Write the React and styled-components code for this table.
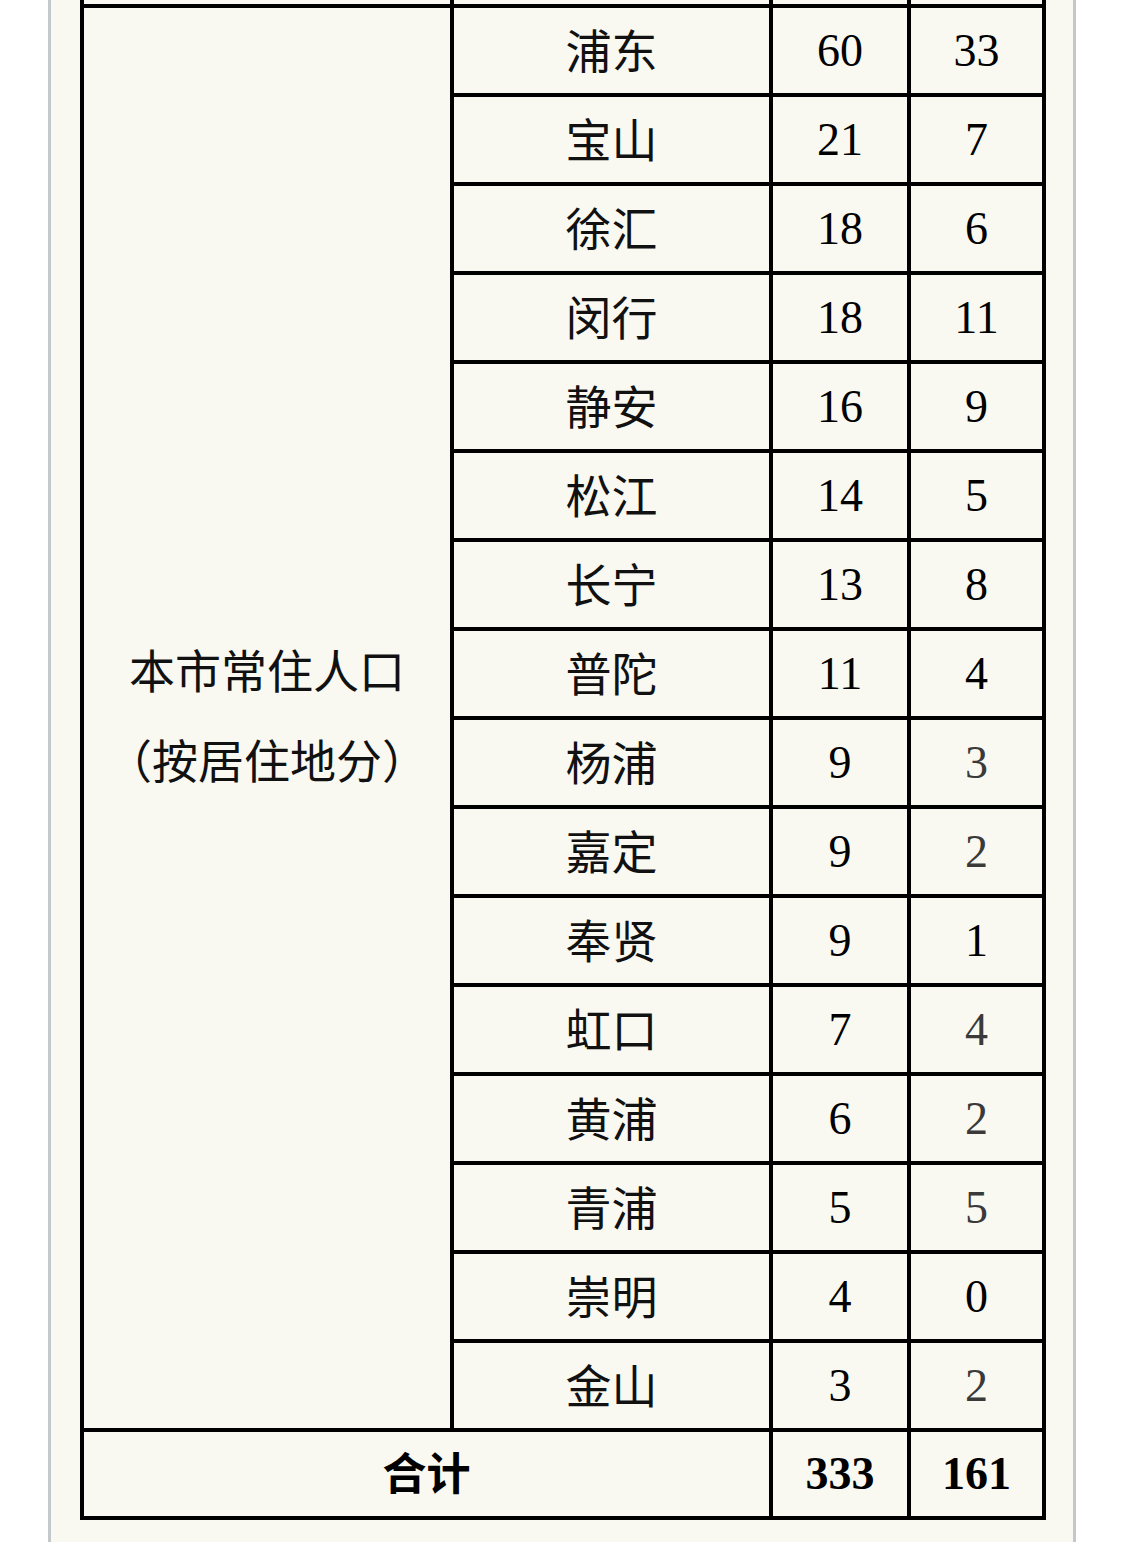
import React from 'react';
import styled, { createGlobalStyle } from 'styled-components';

const GlobalStyle = createGlobalStyle`
    html, body {
        margin: 0;
        padding: 0;
        background: #ffffff;
    }
`;

const districts = [
    { name: '浦东', total: 60, local: 33 },
    { name: '宝山', total: 21, local: 7 },
    { name: '徐汇', total: 18, local: 6 },
    { name: '闵行', total: 18, local: 11 },
    { name: '静安', total: 16, local: 9 },
    { name: '松江', total: 14, local: 5 },
    { name: '长宁', total: 13, local: 8 },
    { name: '普陀', total: 11, local: 4 },
    { name: '杨浦', total: 9, local: 3, muted: true },
    { name: '嘉定', total: 9, local: 2, muted: true },
    { name: '奉贤', total: 9, local: 1 },
    { name: '虹口', total: 7, local: 4, muted: true },
    { name: '黄浦', total: 6, local: 2, muted: true },
    { name: '青浦', total: 5, local: 5, muted: true },
    { name: '崇明', total: 4, local: 0 },
    { name: '金山', total: 3, local: 2, muted: true }
];

export default function App() {
    return (
        <>
            <GlobalStyle />
            <Panel>
                <Table>
                    <colgroup>
                        <col style={{ width: 370 }} />
                        <col style={{ width: 319 }} />
                        <col style={{ width: 138 }} />
                        <col style={{ width: 135 }} />
                    </colgroup>
                    <tbody>
                        <CutRow>
                            <CutCell />
                            <CutCell />
                            <CutCell />
                            <CutCell />
                        </CutRow>

                        {districts.map((d, i) => (
                            <Row key={d.name}>
                                {i === 0 && (
                                    <GroupCell rowSpan={districts.length}>
                                        本市常住人口<br />（按居住地分）
                                    </GroupCell>
                                )}
                                <NameCell>{d.name}</NameCell>
                                <NumCell>{d.total}</NumCell>
                                <NumCell $muted={d.muted}>{d.local}</NumCell>
                            </Row>
                        ))}

                        <TotalRow>
                            <TotalLabel colSpan={2}>合计</TotalLabel>
                            <TotalNum>333</TotalNum>
                            <TotalNum>161</TotalNum>
                        </TotalRow>
                    </tbody>
                </Table>
            </Panel>
        </>
    );
}

const Panel = styled.div`
    background-color: #f9f9f1;

    border-left: 3px solid #c3c8ca;

    border-right: 3px solid #c3c8ca;

    box-sizing: border-box;

    margin-left: 48px;

    min-height: 100vh;

    padding: 0 0 0 29px;

    width: 1028px;
`;

const Table = styled.table`
    border-collapse: collapse;

    table-layout: fixed;

    width: 962px;

    td {
        border: 4px solid #000000;

        padding: 0;

        text-align: center;

        vertical-align: middle;
    }
`;

const CutRow = styled.tr`
    height: 6px;
`;

const CutCell = styled.td`
    && {
        border-top: none;
    }

    font-size: 0;

    line-height: 0;
`;

const Row = styled.tr`
    height: 89px;
`;

const GroupCell = styled.td`
    color: #111111;

    font-family: "Noto Sans CJK SC", "Noto Sans", sans-serif;

    font-feature-settings: "halt";

    font-size: 46px;

    line-height: 90px;

    && {
        padding-bottom: 11px;
    }
`;

const NameCell = styled.td`
    color: #111111;

    font-family: "Noto Sans CJK SC", "Noto Sans", sans-serif;

    font-size: 46px;

    line-height: 1;

    && {
        padding-bottom: 6px;
    }
`;

const NumCell = styled.td`
    color: ${props => (props.$muted ? '#3a3a3a' : '#000000')};

    font-family: "Liberation Serif", "Times New Roman", serif;

    font-size: 46px;

    line-height: 1;
`;

const TotalRow = styled.tr`
    height: 88px;
`;

const TotalLabel = styled.td`
    color: #000000;

    font-family: "Noto Sans CJK SC", "Noto Sans", sans-serif;

    font-size: 44px;

    font-weight: 700;

    line-height: 1;

    && {
        padding-bottom: 6px;
    }
`;

const TotalNum = styled.td`
    color: #000000;

    font-family: "Liberation Serif", "Times New Roman", serif;

    font-size: 46px;

    font-weight: 700;

    line-height: 1;
`;
